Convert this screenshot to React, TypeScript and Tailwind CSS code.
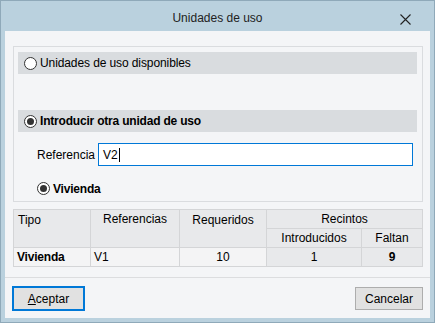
import React from "react";

function Radio({ checked }: { checked?: boolean }) {
  return (
    <span className="w-[13px] h-[13px] rounded-full border border-[#333333] bg-white flex items-center justify-center shrink-0">
      {checked && <span className="w-[7px] h-[7px] rounded-full bg-[#333333]" />}
    </span>
  );
}

export default function App() {
  return (
    <div className="w-[435px] h-[323px] border border-[#8fa9b9] bg-[#bad1de] flex flex-col px-[4px] pb-[4px] font-['Liberation_Sans',Arial,sans-serif] text-[12px] text-black leading-none">
      {/* Title bar */}
      <div className="h-[30px] relative flex items-center justify-center shrink-0">
        <span className="text-[12px] text-[#222] pt-[3px]">Unidades de uso</span>
        <svg
          className="absolute right-[19px] top-[13px]"
          width="11"
          height="11"
          viewBox="0 0 11 11"
        >
          <path d="M0.5 0.5 L10.5 10.5 M10.5 0.5 L0.5 10.5" stroke="#222" strokeWidth="1.1" />
        </svg>
      </div>

      {/* Content */}
      <div className="flex-1 bg-[#f4f5f7] flex flex-col">
        {/* Group box */}
        <div className="mt-[15px] ml-[8px] mr-[7px] h-[156px] border border-[#dadcdf] flex flex-col pt-[5px] pl-[4px] pr-[5px]">
          <div className="h-[22px] bg-[#d9dcdf] flex items-center pl-[6px] gap-[3px]">
            <Radio />
            <span className="tracking-[-0.1px]">Unidades de uso disponibles</span>
          </div>
          <div className="h-[22px] mt-[36px] bg-[#d9dcdf] flex items-center pl-[6px] gap-[3px] font-bold">
            <Radio checked />
            <span className="tracking-[-0.2px]">Introducir otra unidad de uso</span>
          </div>
          <div className="mt-[11px] flex items-center pl-[19px]">
            <span className="w-[61px]">Referencia</span>
            <div className="w-[315px] h-[23px] border border-[#0078d7] bg-white flex items-center pl-[4px]">
              <span>V2</span>
              <span className="w-px h-[14px] bg-black ml-[1px]" />
            </div>
          </div>
          <div className="mt-[16px] flex items-center pl-[19px] gap-[3px] font-bold">
            <Radio checked />
            <span className="tracking-[-0.2px]">Vivienda</span>
          </div>
        </div>

        {/* Table */}
        <div className="mt-[7px] ml-[8px] w-[410px] grid grid-cols-[76px_88px_86px_94px_60px] grid-rows-[18px_18px_18px] gap-px p-px bg-[#d4d5d7]">
          <div className="row-span-2 bg-[#e8e9eb] pl-[4px] pt-[4px]">Tipo</div>
          <div className="row-span-2 bg-[#e8e9eb] text-center pt-[3px]">Referencias</div>
          <div className="row-span-2 bg-[#e8e9eb] text-center pt-[4px]">Requeridos</div>
          <div className="col-span-2 bg-[#e8e9eb] flex items-center justify-center">Recintos</div>
          <div className="bg-[#e8e9eb] flex items-center justify-center">Introducidos</div>
          <div className="bg-[#e8e9eb] flex items-center justify-center">Faltan</div>
          <div className="bg-[#f4f4f5] flex items-center pl-[3px] font-bold tracking-[-0.2px]">Vivienda</div>
          <div className="bg-[#f4f4f5] flex items-center pl-[3px]">V1</div>
          <div className="bg-[#f4f4f5] flex items-center justify-center">10</div>
          <div className="bg-[#e8e9eb] flex items-center justify-center">1</div>
          <div className="bg-[#e8e9eb] flex items-center justify-center font-bold">9</div>
        </div>

        {/* Separator */}
        <div className="mt-[10px] h-px bg-[#dcdddf]" />

        {/* Buttons */}
        <div className="mt-[8px] flex items-center justify-between pl-[7px] pr-[7px]">
          <button className="w-[73px] h-[25px] border-2 border-[#0078d7] bg-[#e1e1e1] flex items-center justify-center">
            <span>
              <span className="underline">A</span>ceptar
            </span>
          </button>
          <button className="w-[68px] h-[23px] border border-[#adadad] bg-[#e1e1e1] flex items-center justify-center">
            Cancelar
          </button>
        </div>
      </div>
    </div>
  );
}
